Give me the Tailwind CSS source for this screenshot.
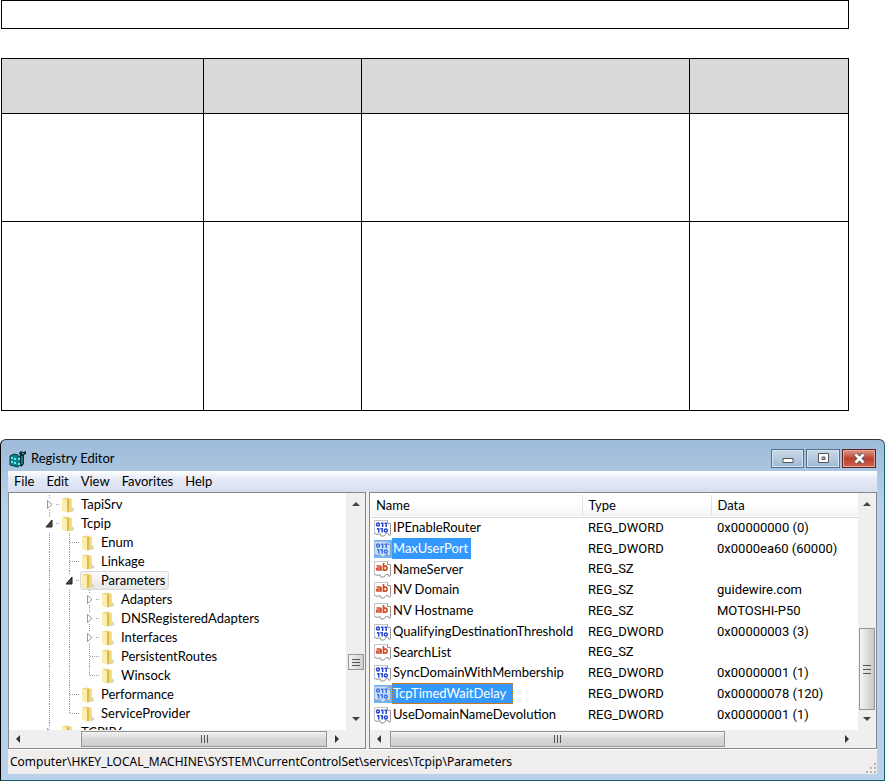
<!DOCTYPE html>
<html lang="en">
<head>
    <meta charset="UTF-8">
    <meta name="viewport" content="width=device-width, initial-scale=1.0">
    <title>Registry Editor</title>
    <script src="https://cdn.jsdelivr.net/npm/@tailwindcss/browser@4"></script>
</head>
<body class="bg-white text-black font-['Lato','Open_Sans',sans-serif] text-[13px] leading-[19px]">

    <!-- shared icons -->
    <svg class="hidden">
        <symbol id="folder" viewBox="0 0 16 18">
            <path d="M1 2.500 6 1.500 10.500 3v12l-3 1.500L1 14.500z" fill="#ecd57d"/>
            <path d="M1 2.500 6 4v12.500L1 14.500z" fill="#fbeeb0"/>
            <path d="M6 4l2-1.500V15L6 16.500z" fill="#dcb94b"/>
            <path d="M8 2.500 10.500 3v12l-2.500 1z" fill="#f0d97f"/>
            <path d="M10.500 11.500h1.500l1.500 3-3 1.500H8z" fill="#ded7ae"/>
        </symbol>
        <symbol id="page" viewBox="0 0 18 18">
            <path d="M.5 1.500h13l3 3v11l-1.500 1-1-2-2 0-2 2.500H7l-1-2.500-2 1-3.500-1z" fill="#fff"/>
            <path d="M.5 14.500v-13h13" fill="none" stroke="#c4c4c4"/>
            <path d="M13.500 1.500v3h3v11l-1.500 1-1-2h-2l-2 2.500H7l-1-2.500-2 1-3.500-1" fill="none" stroke="#949494"/>
        </symbol>
        <symbol id="binary" viewBox="0 0 18 18">
            <use href="#page"/>
            <g fill="none" stroke="#2746cf" stroke-width="1.500">
                <circle cx="4" cy="5.500" r="1.500"/>
                <path d="M7 4.200h1.700V8M10.500 4.200h1.700V8M3 9.800h1.700v3.700M6.500 9.800h1.700v3.700"/>
                <circle cx="11.800" cy="11.500" r="1.500"/>
            </g>
        </symbol>
        <symbol id="string" viewBox="0 0 18 18">
            <use href="#page"/>
            <g fill="none" stroke="#d34a25" stroke-width="1.700">
                <path d="M2.500 6h3.500q1 0 1 1v3.500M7 8H4q-1.500 0-1.500 1T4 10h3"/>
                <path d="M9.500 3v7.200h2q1.500 0 1.500-1.500v-1q0-1.500-1.500-1.500h-2"/>
            </g>
        </symbol>
        <symbol id="up" viewBox="0 0 8 5"><path d="M0 5 4 1l4 4z" fill="#444"/></symbol>
        <symbol id="down" viewBox="0 0 8 5"><path d="M0 0h8L4 4z" fill="#444"/></symbol>
        <symbol id="left" viewBox="0 0 5 8"><path d="M5 0v8L1 4z" fill="#333"/></symbol>
        <symbol id="right" viewBox="0 0 5 8"><path d="M0 0v8l4-4z" fill="#333"/></symbol>
    </svg>

    <div class="ml-px mr-9 h-[29px] border border-black"></div>

    <div class="ml-px mr-9 mt-[29px]">
        <table class="w-full table-fixed border-collapse">
            <colgroup>
                <col class="w-[23.8%]">
                <col class="w-[18.7%]">
                <col class="w-[38.7%]">
                <col>
            </colgroup>
            <thead>
                <tr class="h-[55px] bg-[#d9d9d9]">
                    <th class="border border-black"></th>
                    <th class="border border-black"></th>
                    <th class="border border-black"></th>
                    <th class="border border-black"></th>
                </tr>
            </thead>
            <tbody>
                <tr class="h-[108px]">
                    <td class="border border-black"></td>
                    <td class="border border-black"></td>
                    <td class="border border-black"></td>
                    <td class="border border-black"></td>
                </tr>
                <tr class="h-[189px]">
                    <td class="border border-black"></td>
                    <td class="border border-black"></td>
                    <td class="border border-black"></td>
                    <td class="border border-black"></td>
                </tr>
            </tbody>
        </table>
    </div>

    <main class="mt-7 rounded-t-md border border-t-[#30363d] border-l-black border-r-[#16606f] border-b-[#16606f] bg-linear-to-b from-[#9dbbd9] via-[#b9d1ea] via-20% to-[#b9d1ea] px-[7px] pb-[6px]">
        <header class="flex h-[31px] items-center pt-[6px]">
            <svg class="ml-px size-[18px]" viewBox="0 0 18 18">
                <path d="M1 6 5 4l4 1v2l3-1v8l-3 3-8-2z" fill="#117f85" stroke="#083b40"/>
                <path d="M2 7h2v2H2zm3 1h2v2H5zM2 11h2v2H2zm3 1h2v2H5zm4-4h2v2H9zm0 5h2v2H9z" fill="#5ff0ee"/>
                <path d="M10 3 12 1l2 1 3-1v3l-2 1v9l-3 3-1-2V6z" fill="#0d2d31"/>
                <path d="M13 3l2 1M13 6v8" stroke="#38b7bb"/>
            </svg>
            <h1 class="ml-1">Registry Editor</h1>
            <div class="ml-auto mr-px flex gap-[2px]">
                <button aria-label="Minimize" class="flex h-[19px] w-[33px] items-center justify-center border border-[#55708d] bg-linear-to-b from-[#c9d9e9] via-[#b6cadf] to-[#9ab7d4] shadow-[inset_0_0_0_1px_#d7e4f0]">
                    <svg class="mt-1 h-[6px] w-3" viewBox="0 0 12 6"><path d="M1 .5h10v4H1z" fill="#fff" stroke="#555"/></svg>
                </button>
                <button aria-label="Maximize" class="flex h-[19px] w-[34px] items-center justify-center border border-[#55708d] bg-linear-to-b from-[#c9d9e9] via-[#b6cadf] to-[#9ab7d4] shadow-[inset_0_0_0_1px_#d7e4f0]">
                    <svg class="size-[11px]" viewBox="0 0 11 11"><path d="M.5.5h10v9H.5zM4 4v2.500h3V4z" fill="#fff" fill-rule="evenodd" stroke="#555"/></svg>
                </button>
                <button aria-label="Close" class="flex h-[19px] w-[34px] items-center justify-center border border-[#5c2020] bg-linear-to-b from-[#d99a8c] via-[#bd3f30] to-[#ca6350] shadow-[inset_0_0_0_1px_#e5a79a]">
                    <svg class="h-[11px] w-[13px]" viewBox="0 0 13 11"><path d="M2.500 1.500l8 8M10.500 1.500l-8 8" stroke="#555" stroke-width="4.500"/><path d="M2.500 1.500l8 8M10.500 1.500l-8 8" stroke="#fff" stroke-width="2.600"/></svg>
                </button>
            </div>
        </header>

        <nav class="flex h-[21px] items-center gap-3 bg-linear-to-b from-white via-[#e4e9f5] via-40% to-[#d7deef] pl-[6px]">
            <button>File</button>
            <button>Edit</button>
            <button>View</button>
            <button>Favorites</button>
            <button>Help</button>
        </nav>

        <div class="flex gap-[3px] bg-[#f0f0f0]">
            <!-- key tree -->
            <section class="w-[41.2%] border border-[#828790] bg-white">
                <div class="flex h-[237px]">
                    <ul id="tree" class="min-w-0 flex-1 overflow-hidden pl-[31px] pt-[2px]"></ul>
                    <div class="flex w-[19px] flex-col items-center bg-[#efefef] py-2">
                        <svg class="h-[5px] w-2"><use href="#up"/></svg>
                        <div class="mt-auto flex h-4 w-4 flex-col items-center justify-center gap-[2px] border border-[#979797] bg-linear-to-r from-[#f4f4f4] to-[#cfcfcf]">
                            <i class="h-px w-2 bg-[#555]"></i><i class="h-px w-2 bg-[#555]"></i><i class="h-px w-2 bg-[#555]"></i>
                        </div>
                        <svg class="mt-[47px] h-[5px] w-2"><use href="#down"/></svg>
                    </div>
                </div>
                <div class="flex h-[18px] items-center bg-[#efefef] pl-[6px] pr-[25px]">
                    <svg class="h-2 w-[5px]"><use href="#left"/></svg>
                    <div class="ml-[61px] flex h-4 flex-1 items-center justify-center gap-[2px] border border-[#979797] bg-linear-to-b from-[#f4f4f4] via-[#d6d6d6] to-[#d0d0d0]">
                        <i class="h-2 w-px bg-[#555]"></i><i class="h-2 w-px bg-[#555]"></i><i class="h-2 w-px bg-[#555]"></i>
                    </div>
                    <svg class="ml-2 h-2 w-[5px]"><use href="#right"/></svg>
                </div>
            </section>

            <!-- values of the selected key -->
            <section class="min-w-0 flex-1 border border-[#828790] bg-white">
                <div class="flex h-[237px]">
                    <div class="min-w-0 flex-1 pl-[1px] pt-[2px]">
                        <table class="w-full table-fixed border-collapse">
                            <thead>
                                <tr class="h-[22px] border-b border-[#d8d9da] bg-linear-to-b from-white from-40% to-[#f2f3f5] text-left">
                                    <th class="w-[211px] border-r border-[#e2e3e5] pl-[5px] font-normal">Name</th>
                                    <th class="w-[129px] border-r border-[#e2e3e5] pl-[6px] font-normal">Type</th>
                                    <th class="pl-[6px] font-normal">Data</th>
                                </tr>
                            </thead>
                            <tbody id="values"></tbody>
                        </table>
                    </div>
                    <div class="flex w-[18px] flex-col items-center bg-[#efefef] py-2">
                        <svg class="h-[5px] w-2"><use href="#up"/></svg>
                        <div class="mt-auto flex h-[82px] w-4 flex-col items-center justify-center gap-[3px] border border-[#979797] bg-linear-to-r from-[#f4f4f4] to-[#c8c8c8]">
                            <i class="h-px w-2 bg-[#555]"></i><i class="h-px w-2 bg-[#555]"></i><i class="h-px w-2 bg-[#555]"></i>
                        </div>
                        <svg class="mt-[7px] h-[5px] w-2"><use href="#down"/></svg>
                    </div>
                </div>
                <div class="flex h-[18px] items-center bg-[#efefef] pl-[6px] pr-[26px]">
                    <svg class="h-2 w-[5px]"><use href="#left"/></svg>
                    <div class="ml-[9px] flex h-4 w-[335px] items-center justify-center gap-[2px] border border-[#979797] bg-linear-to-b from-[#f4f4f4] via-[#d6d6d6] to-[#d0d0d0]">
                        <i class="h-2 w-px bg-[#555]"></i><i class="h-2 w-px bg-[#555]"></i><i class="h-2 w-px bg-[#555]"></i>
                    </div>
                    <svg class="ml-auto h-2 w-[5px]"><use href="#right"/></svg>
                </div>
            </section>
        </div>

        <footer class="flex h-[25px] items-center justify-between border-t border-white bg-[#f0eded] pl-[2px] font-['Noto_Sans',sans-serif] text-xs">
            <span>Computer\HKEY_LOCAL_MACHINE\SYSTEM\CurrentControlSet\services\Tcpip\Parameters</span>
            <svg class="size-[11px] self-end" viewBox="0 0 11 11"><path d="M8 0h2v2H8zM4 4h2v2H4zM8 4h2v2H8zM0 8h2v2H0zM4 8h2v2H4zM8 8h2v2H8z" fill="#b5b5b5"/></svg>
        </footer>
    </main>

    <script>
        // [level, name, state]
        const keys = [
            [0, 'TapiSrv', 'closed'],
            [0, 'Tcpip', 'open'],
            [1, 'Enum', 'leaf'],
            [1, 'Linkage', 'leaf'],
            [1, 'Parameters', 'open'],
            [2, 'Adapters', 'closed'],
            [2, 'DNSRegisteredAdapters', 'closed'],
            [2, 'Interfaces', 'closed'],
            [2, 'PersistentRoutes', 'leaf'],
            [2, 'Winsock', 'leaf'],
            [1, 'Performance', 'leaf'],
            [1, 'ServiceProvider', 'leaf'],
            [0, 'TCPIP6', 'closed'],
        ];

        const values = [
            ['IPEnableRouter', 'REG_DWORD', '0x00000000 (0)'],
            ['MaxUserPort', 'REG_DWORD', '0x0000ea60 (60000)'],
            ['NameServer', 'REG_SZ', ''],
            ['NV Domain', 'REG_SZ', 'guidewire.com'],
            ['NV Hostname', 'REG_SZ', 'MOTOSHI-P50'],
            ['QualifyingDestinationThreshold', 'REG_DWORD', '0x00000003 (3)'],
            ['SearchList', 'REG_SZ', ''],
            ['SyncDomainWithMembership', 'REG_DWORD', '0x00000001 (1)'],
            ['TcpTimedWaitDelay', 'REG_DWORD', '0x00000078 (120)'],
            ['UseDomainNameDevolution', 'REG_DWORD', '0x00000001 (1)'],
        ];

        const guide = '<path d="M9.500 0v19" stroke="#999" stroke-dasharray="1 1"/>';
        const marks = {
            closed: '<path d="M9.500 0v4M9.500 15v4M16 9.500h4" stroke="#999" stroke-dasharray="1 1"/><path d="M7.500 5.500v8l4.500-4z" fill="#fff" stroke="#999"/>',
            open: '<path d="M9.500 0v4M16 9.500h4" stroke="#999" stroke-dasharray="1 1"/><path d="M12 6v7H6z" fill="#444" stroke="#222"/>',
            leaf: guide + '<path d="M10 9.500h10" stroke="#999" stroke-dasharray="1 1"/>',
            last: '<path d="M9.500 0v9.500h10.500" fill="none" stroke="#999" stroke-dasharray="1 1"/>',
        };
        const cell = inner => `<svg class="h-[19px] w-5 shrink-0" viewBox="0 0 20 19">${inner}</svg>`;

        document.getElementById('tree').innerHTML = keys.map(([level, name, state]) => {
            const last = name === 'Winsock' || name === 'ServiceProvider';
            // the level-1 branch ends at ServiceProvider, the level-0 one runs on
            const box = name === 'Parameters'
                ? 'flex h-[19px] items-center rounded-[3px] border border-[#d9d9d9] bg-linear-to-b from-[#fafafa] to-[#e8e8e8] pr-[3px]'
                : 'flex h-[19px] items-center border border-transparent';
            return `<li class="flex h-[19px] items-center">${cell(guide).repeat(level)}${cell(marks[last ? 'last' : state])}
                <span class="${box}"><svg class="mr-1 h-[18px] w-4"><use href="#folder"/></svg>${name}</span></li>`;
        }).join('');

        document.getElementById('values').innerHTML = values.map(([name, type, data]) => {
            const icon = type === 'REG_SZ' ? 'string' : 'binary';
            let label = 'h-[21px] border border-transparent pr-1';
            let tint = 'h-[18px] w-[18px] shrink-0';
            if (name === 'MaxUserPort' || name === 'TcpTimedWaitDelay') {
                label = name === 'MaxUserPort'
                    ? 'h-[21px] border border-[#3399ff] bg-[#3399ff] pr-[2px] text-white'
                    : 'h-[21px] border border-dotted border-[#d0771e] bg-[#3399ff] pr-[6px] text-white';
                tint = 'h-[18px] w-[18px] shrink-0 bg-[#6fb4fa] [&>use]:opacity-60';
            }
            return `<tr class="h-[21px] nth-[4n+3]:h-5">
                <td class="p-0"><div class="flex h-5 items-center pl-[3px]"><svg class="${tint}"><use href="#${icon}"/></svg><span class="${label}">${name}</span></div></td>
                <td class="p-0 pl-[6px] font-['Roboto',sans-serif]"><div class="h-5">${type}</div></td>
                <td class="p-0 pl-[6px] font-['Roboto',sans-serif]"><div class="h-5">${data}</div></td>
            </tr>`;
        }).join('');
    </script>
</body>
</html>
